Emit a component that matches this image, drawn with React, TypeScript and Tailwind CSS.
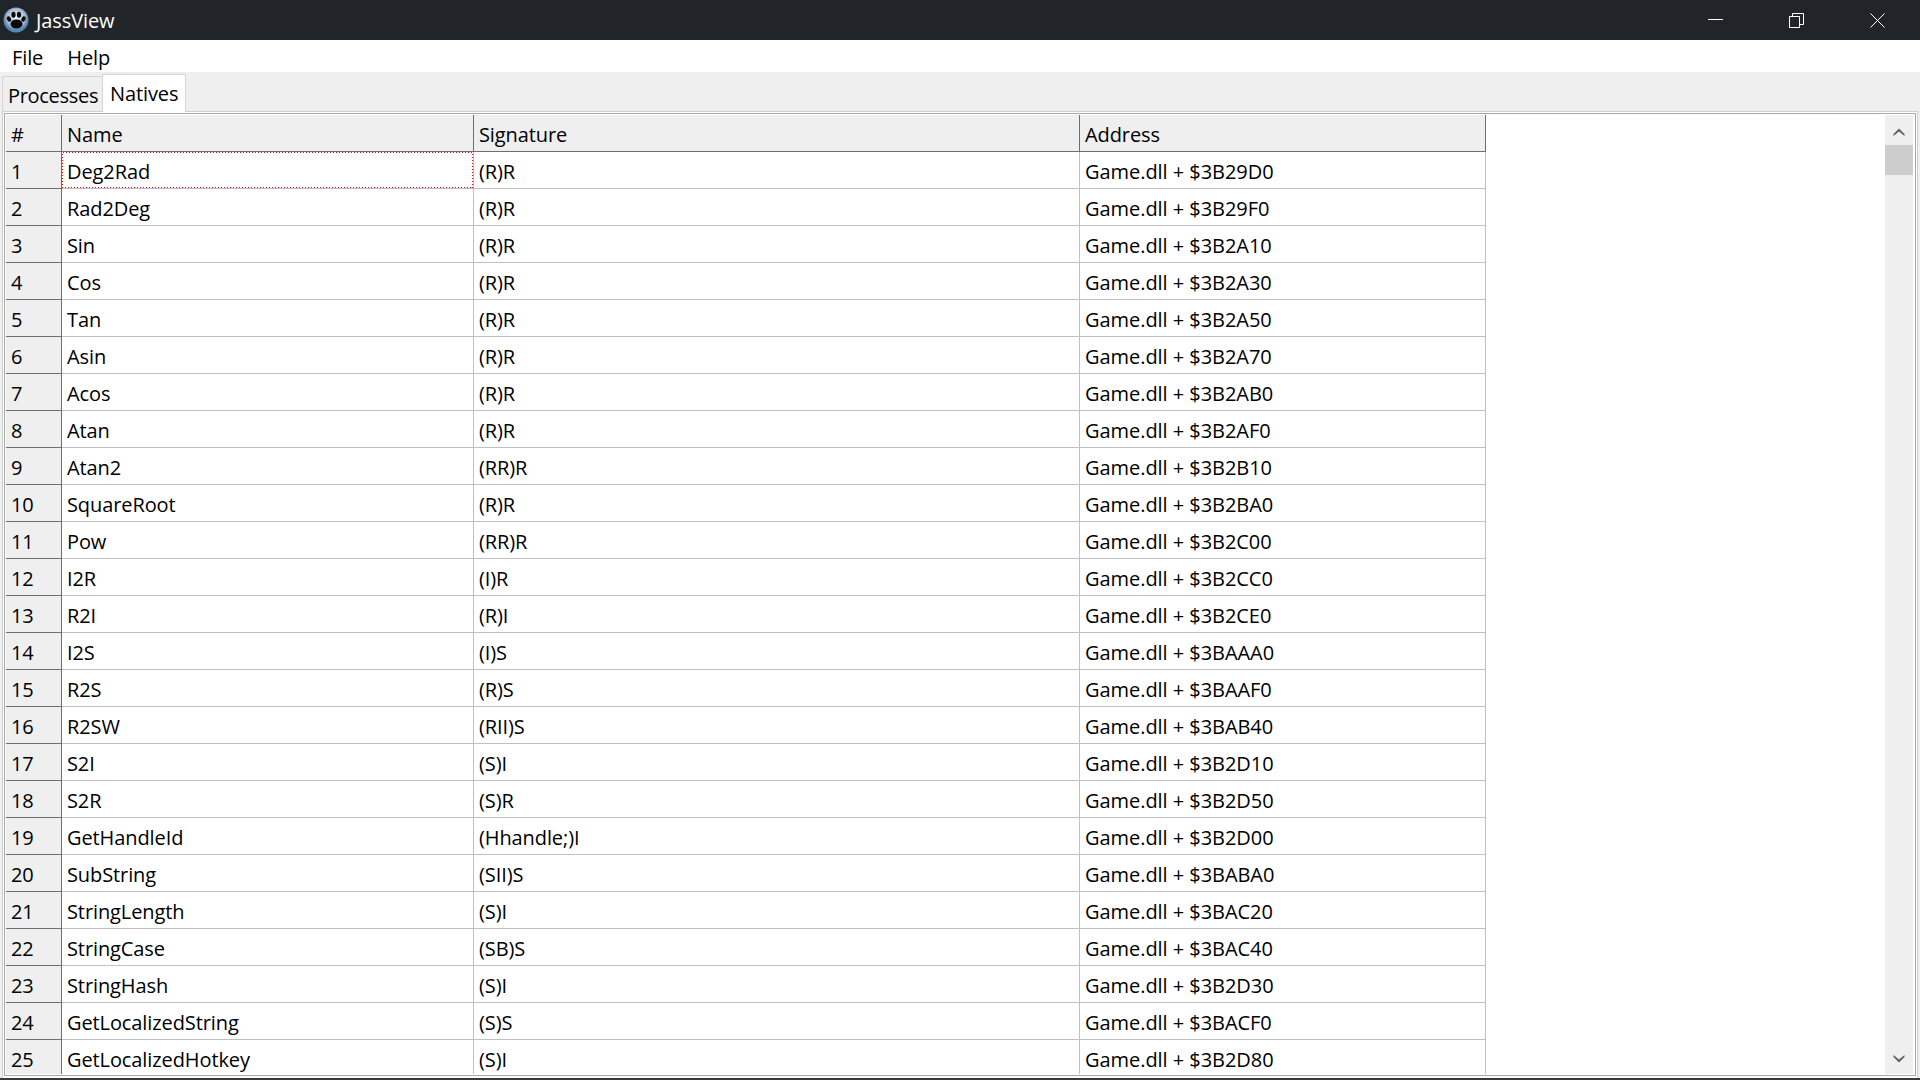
const rows: [string, string, string][] = [
  ["Deg2Rad", "(R)R", "$3B29D0"],
  ["Rad2Deg", "(R)R", "$3B29F0"],
  ["Sin", "(R)R", "$3B2A10"],
  ["Cos", "(R)R", "$3B2A30"],
  ["Tan", "(R)R", "$3B2A50"],
  ["Asin", "(R)R", "$3B2A70"],
  ["Acos", "(R)R", "$3B2AB0"],
  ["Atan", "(R)R", "$3B2AF0"],
  ["Atan2", "(RR)R", "$3B2B10"],
  ["SquareRoot", "(R)R", "$3B2BA0"],
  ["Pow", "(RR)R", "$3B2C00"],
  ["I2R", "(I)R", "$3B2CC0"],
  ["R2I", "(R)I", "$3B2CE0"],
  ["I2S", "(I)S", "$3BAAA0"],
  ["R2S", "(R)S", "$3BAAF0"],
  ["R2SW", "(RII)S", "$3BAB40"],
  ["S2I", "(S)I", "$3B2D10"],
  ["S2R", "(S)R", "$3B2D50"],
  ["GetHandleId", "(Hhandle;)I", "$3B2D00"],
  ["SubString", "(SII)S", "$3BABA0"],
  ["StringLength", "(S)I", "$3BAC20"],
  ["StringCase", "(SB)S", "$3BAC40"],
  ["StringHash", "(S)I", "$3B2D30"],
  ["GetLocalizedString", "(S)S", "$3BACF0"],
  ["GetLocalizedHotkey", "(S)I", "$3B2D80"],
];

function Paw() {
  return (
    <svg width="26" height="26" viewBox="0 0 26 26" className="shrink-0">
      <defs>
        <radialGradient id="g" cx="50%" cy="42%" r="58%">
          <stop offset="0%" stopColor="#eef1f6" />
          <stop offset="60%" stopColor="#aebfd8" />
          <stop offset="85%" stopColor="#5a7fa8" />
          <stop offset="100%" stopColor="#3f9be6" />
        </radialGradient>
      </defs>
      <circle cx="13" cy="13" r="12.5" fill="url(#g)" />
      <ellipse cx="13.5" cy="17" rx="6" ry="4.6" fill="#050505" />
      <ellipse cx="6" cy="12" rx="2" ry="2.8" fill="#050505" transform="rotate(-25 6 12)" />
      <ellipse cx="10.5" cy="7.8" rx="2.1" ry="3" fill="#050505" />
      <ellipse cx="16" cy="7.8" rx="2.1" ry="3" fill="#050505" />
      <ellipse cx="20.5" cy="12" rx="2" ry="2.8" fill="#050505" transform="rotate(25 20.5 12)" />
    </svg>
  );
}

function Row({ n, r, first }: { n: number; r: [string, string, string]; first: boolean }) {
  return (
    <div className="flex h-[37px] shrink-0 w-[1480px]">
      <div className="w-[56px] shrink-0 bg-[#efefef] border-r border-b border-r-[#6e6e6e] border-b-[#6e6e6e] pl-[5px] leading-[39px]">{n}</div>
      <div className="w-[412px] shrink-0 border-r border-b border-[#c0c0c0] relative">
        <div className="pl-[5px] leading-[39px]">{r[0]}</div>
        {first && (
          <svg width="411" height="36" className="absolute left-0 top-0" shapeRendering="crispEdges">
            <rect x="0.5" y="0.5" width="410" height="35" fill="none" stroke="#ff0000" strokeDasharray="1 2" />
          </svg>
        )}
      </div>
      <div className="w-[606px] shrink-0 border-r border-b border-[#c0c0c0] pl-[5px] leading-[39px]">{r[1]}</div>
      <div className="w-[406px] shrink-0 border-r border-b border-[#c0c0c0] pl-[5px] leading-[39px] tracking-[-0.05px]">Game.dll + {r[2]}</div>
    </div>
  );
}

export default function App() {
  return (
    <div className="w-[1920px] h-[1080px] overflow-hidden flex flex-col bg-[#efefef] text-[#000] text-[20px] font-['Open_Sans',sans-serif] tracking-[-0.1px]">
      <div className="h-[40px] shrink-0 bg-[#212529] flex items-center text-white">
        <div className="ml-[3px] mr-[7px]"><Paw /></div>
        <span className="leading-[40px] mt-[2px]">JassView</span>
        <div className="ml-auto flex items-center h-full">
          <svg width="15" height="2" viewBox="0 0 15 2" className="mr-[66px]"><rect width="15" height="1" fill="#fff" /></svg>
          <svg width="15" height="15" viewBox="0 0 15 15" className="mr-[66px]" fill="none" stroke="#fff">
            <rect x="0.5" y="3.5" width="10" height="11" />
            <path d="M3.5 3.5V0.5H14.5V11.5H10.5" />
          </svg>
          <svg width="15" height="15" viewBox="0 0 15 15" className="mr-[35px]" fill="none" stroke="#fff"><path d="M0.5 0.5L14.5 14.5M14.5 0.5L0.5 14.5" /></svg>
        </div>
      </div>
      <div className="h-[32px] shrink-0 bg-white flex items-center pl-[12px] pt-[3px] gap-[24px] leading-[29px]">
        <span>File</span>
        <span>Help</span>
      </div>
      <div className="h-[39px] shrink-0 flex items-end pl-[2px]">
        <div className="h-[35px] w-[100px] border-t border-l border-[#d4d4d4] pl-[5px] leading-[37px] tracking-[-0.3px]">Processes</div>
        <div className="h-[38px] w-[84px] bg-white border-t border-l border-r border-[#d4d4d4] pl-[7px] leading-[37px] -mb-[1px] z-10">Natives</div>
      </div>
      <div className="flex-1 min-h-0 ml-[2px] mr-[2px] border-t border-l border-r border-[#d0d0d0] pt-[1px] px-[1px] pb-[2px] bg-white">
        <div className="h-full border border-[#a8a8a8] bg-white p-[1px] flex">
          <div className="flex-1 min-w-0 flex flex-col overflow-hidden">
            <div className="flex h-[37px] shrink-0 w-[1480px] bg-[#efefef]">
              <div className="w-[56px] shrink-0 border-r border-b border-[#6e6e6e] pl-[5px] leading-[39px]">#</div>
              <div className="w-[412px] shrink-0 border-r border-b border-[#6e6e6e] pl-[5px] leading-[39px]">Name</div>
              <div className="w-[606px] shrink-0 border-r border-b border-[#6e6e6e] pl-[5px] leading-[39px]">Signature</div>
              <div className="w-[406px] shrink-0 border-r border-b border-[#6e6e6e] pl-[5px] leading-[39px]">Address</div>
            </div>
            {rows.map((r, i) => (
              <Row key={i} n={i + 1} r={r} first={i === 0} />
            ))}
          </div>
          <div className="w-[28px] shrink-0 bg-[#efefef] flex flex-col mr-[1px]">
            <div className="h-[30px] flex items-center justify-center pt-[3px]">
              <svg width="12" height="10" viewBox="0 0 12 10"><path d="M0.5 7L6 1.5L11.5 7V9L6 4.5L0.5 9Z" fill="#606060" /></svg>
            </div>
            <div className="h-[30px] bg-[#cdcdcd]" />
            <div className="mt-auto h-[30px] flex items-center justify-center">
              <svg width="12" height="10" viewBox="0 0 12 10"><path d="M0.5 1L6 5.5L11.5 1V3L6 8.5L0.5 3Z" fill="#606060" /></svg>
            </div>
          </div>
        </div>
      </div>
      <div className="h-[2px] shrink-0 bg-[#3a3a3a]" />
    </div>
  );
}
